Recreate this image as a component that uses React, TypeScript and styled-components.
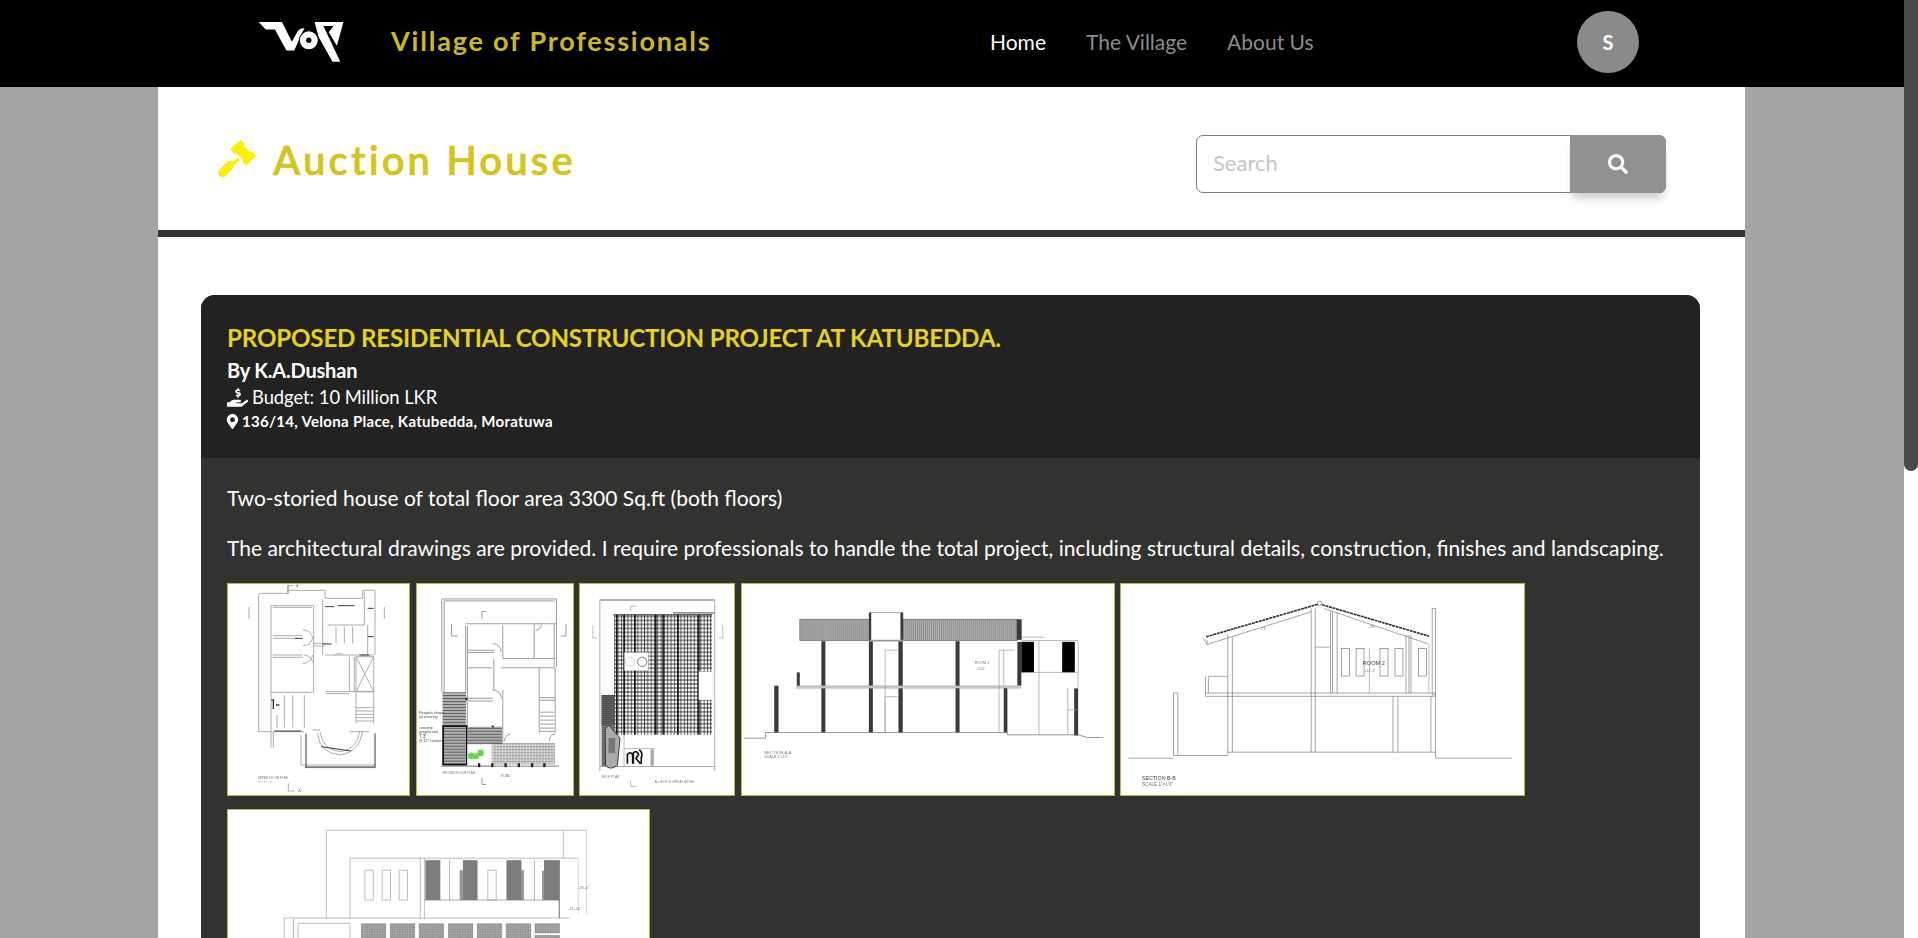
import React from "react";
import styled, { createGlobalStyle } from "styled-components";
import { FaHandHoldingUsd, FaMapMarkerAlt, FaSearch } from "react-icons/fa";

const FONT = `"Lato", "Open Sans", "Liberation Sans", sans-serif`;

const Global = createGlobalStyle`
  html, body { height: 100%; overflow: hidden; }
  body { margin: 0; background: #a4a4a4; font-family: ${FONT}; }
  * { box-sizing: border-box; }
`;

const Shell = styled.div`
  display: flex;
  height: 100vh;
  overflow: hidden;
`;
const Viewport = styled.div`
  flex: 1;
  min-width: 0;
  overflow-y: auto;
  scrollbar-width: none;
`;
const Rail = styled.div`
  width: 14px;
  flex: none;
  background: #fff;
`;
const RailThumb = styled.div`
  height: 471px;
  background: #4a4a4a;
  border-radius: 0 0 7px 7px;
`;

const Header = styled.header`
  height: 87px;
  background: #000;
  padding-left: 258px;
  display: grid;
  grid-template-columns: 732px 587px 62px;
  align-items: center;
`;
const Brand = styled.div`
  display: flex;
  align-items: center;
`;
const LogoSvg = styled.svg`
  width: 86px;
  height: 40px;
  margin: -4px 47px 0 0;
`;
const BrandName = styled.span`
  color: #c9b920;
  font-size: 27px;
  font-weight: 700;
  letter-spacing: 1.8px;
  white-space: nowrap;
  margin-top: -6px;
`;
const Nav = styled.nav`
  display: flex;
  gap: 40px;
  margin-top: -4px;
`;
const NavLink = styled.a<{ $active?: boolean }>`
  color: ${(p) => (p.$active ? "#ffffff" : "#8c8c8c")};
  font-size: 21px;
  white-space: nowrap;
`;
const Avatar = styled.div`
  width: 62px;
  height: 62px;
  margin-top: -3px;
  border-radius: 50%;
  background: #8a8a88;
  color: #fff;
  font-weight: 700;
  font-size: 20px;
  display: flex;
  align-items: center;
  justify-content: center;
`;

const Sheet = styled.main`
  width: 1587px;
  margin-left: 158px;
  min-height: 1781px;
  background: #fff;
`;
const Band = styled.section`
  height: 143px;
  padding: 48px 79px 37px 60px;
  display: flex;
  align-items: flex-start;
  justify-content: space-between;
`;
const PageTitle = styled.h1`
  margin: -4px 0 0;
  display: flex;
  align-items: center;
  gap: 13px;
  color: #d4c41c;
  font-size: 40px;
  line-height: 58px;
  font-weight: 600;
  letter-spacing: 3.1px;
  -webkit-text-stroke: 0.6px #d4c41c;
`;
const GavelSvg = styled.svg`
  width: 42px;
  height: 42px;
  flex: none;
`;
const SearchBox = styled.div`
  width: 470px;
  height: 58px;
  display: flex;
  border: 1px solid #7c7c7c;
  border-radius: 7px;
`;
const SearchInput = styled.input`
  flex: 1;
  min-width: 0;
  border: none;
  outline: none;
  background: transparent;
  padding: 0 16px 3px;
  font-family: ${FONT};
  font-size: 22px;
  &::placeholder { color: #c4c4c8; }
`;
const SearchButton = styled.button`
  width: 96px;
  margin: -1px -1px -1px 0;
  border: none;
  border-radius: 0 7px 7px 0;
  background: #919190;
  color: #fff;
  font-size: 20px;
  display: flex;
  align-items: center;
  justify-content: center;
  box-shadow: 0 8px 10px -3px rgba(0, 0, 0, 0.22);
`;
const Rule = styled.hr`
  margin: 0;
  height: 7px;
  border: none;
  background: #333;
`;
const Card = styled.article`
  margin: 58px 45px 0 43px;
  border-radius: 14px;
  overflow: hidden;
  background: #323230;
`;
const CardHead = styled.div`
  background: #222;
  padding: 28px 26px 27px;
  color: #fff;
`;
const ProjectTitle = styled.h2`
  margin: 0;
  color: #e7d21a;
  font-size: 24.2px;
  line-height: 30px;
  font-weight: 700;
  letter-spacing: -0.2px;
`;
const Owner = styled.div`
  margin-top: 5px;
  font-size: 20px;
  line-height: 24px;
  font-weight: 700;
  letter-spacing: -0.2px;
`;
const Budget = styled.div`
  margin-top: 3px;
  display: flex;
  align-items: center;
  gap: 4px;
  font-size: 18.4px;
  line-height: 24px;
  letter-spacing: -0.05px;
`;
const Place = styled.div`
  margin: 2px 0 0 -2px;
  display: flex;
  align-items: center;
  gap: 2px;
  font-size: 15px;
  line-height: 20px;
  font-weight: 700;
  letter-spacing: 0.3px;
`;
const CardBody = styled.div`
  min-height: 1343px;
  padding: 25px 26px;
  color: #fff;
`;
const Para = styled.p`
  margin: 0 0 20px;
  font-size: 21px;
  line-height: 30px;
  white-space: nowrap;
`;
const Gallery = styled.div`
  display: flex;
  flex-wrap: wrap;
  gap: 13px 5.5px;
`;
const Thumb = styled.svg<{ $w: number }>`
  width: ${(p) => p.$w}px;
  height: 213px;
  background: #fff;
  border: 1px solid #bdb53f;
  display: block;
  flex: none;
`;
const Ink = styled.g`
  filter: blur(0.3px);
`;
const Note = styled.text<{ $dark?: boolean }>`
  font-family: "Liberation Sans", sans-serif;
  fill: ${(p) => (p.$dark ? "#444" : "#777")};
`;

const Drawing = ({ w, box, children }: { w: number; box: string; children: React.ReactNode }) => (
  <Thumb $w={w} viewBox={box}>
    <Ink>{children}</Ink>
  </Thumb>
);

const Logo = () => (
  <LogoSvg viewBox="55 38 250 118">
    <path fill="#fff" d="M55 38H124L153 96L170 66C176 59 184 56 190 56L160 122H137L103 60H76Z" />
    <circle cx="203" cy="92" r="28" fill="#fff" stroke="#000" strokeWidth="3" />
    <circle cx="203" cy="92" r="8" fill="#000" />
    <path fill="#fff" fillRule="evenodd" d="M220 38H305L286 108L262 68L276 50H246L296 155H273L232 82Z" />
  </LogoSvg>
);

const Gavel = () => (
  <GavelSvg viewBox="0 0 42 42">
    <path fill="#ffee00" d="M12 9.5L23 1L26.5 5L26 7L33 13.5L35 13L38 17L28 26.5L24.5 22.5L25 20.5L18 14L16 14.5Z" />
    <path fill="none" stroke="#ffee00" strokeWidth="3.4" d="M21 20L12 27" />
    <path fill="none" stroke="#ffee00" strokeWidth="8.5" strokeLinecap="round" d="M12 26L4.5 34" />
  </GavelSvg>
);

const G = "#9c9c9c";
const D = "#3a3a3a";

const Plan1 = () => (
  <Drawing w={183} box="21 27 543 633">
    <g fill="none" stroke={G} strokeWidth="2.5">
      <path d="M113 472V60Q113 55 120 55H200V32H216M200 46H312V70H425V46H462V240M84 96V132M490 96V132" />
      <path d="M150 92H278V352H150ZM155 97H273M155 182H245M155 190H228M155 240H245M155 247H245" />
      <path d="M278 205H312M278 213H312M305 72V240M430 50V150M385 245V350M400 245V350M312 240H458" />
      <path d="M405 245H458V350H405ZM405 245L458 350M458 245L405 350M315 350H458M315 356H385" />
      <path d="M405 350V445M458 350V445M405 398H458M405 408H458M405 418H458M405 428H458M405 438H458" />
      <path d="M150 350V470H113M155 470H250M150 470V518M157 470V518M385 470H445M275 465H298" />
      <path d="M240 480V570M240 570H465M250 578H465M290 475Q295 535 360 540Q415 530 425 470M298 472Q304 525 360 530Q408 522 416 470" />
      <path d="M245 165A28 28 0 0 1 275 192M245 212A28 28 0 0 0 275 188M245 265A28 28 0 0 0 275 240M250 240A28 28 0 0 1 275 262M168 420V460M190 360V458M215 360V458M250 360V458" />
      <path d="M340 240A24 24 0 0 1 365 238M440 150V240M202 30V55M202 625V648H220M345 155V205M370 155V205M395 155V205M320 150H430" />
    </g>
    <g fill="none" stroke={D} strokeWidth="3">
      <path d="M312 95H340M350 92H400M222 190H245M305 207H332M160 468H240M255 476V578M255 576H460M462 475V578M150 375H158M300 515L390 528M415 240H445M440 100H458M440 185H458" />
      <path d="M157 372V402M165 390H175" strokeWidth="4" />
    </g>
    <Note x="110" y="612" fontSize="9">UPPER FLOOR PLAN</Note>
    <Note x="110" y="620" fontSize="7">SCALE 1"=10'</Note>
    <Note x="225" y="36" fontSize="11">A</Note>
    <Note x="232" y="650" fontSize="11">A</Note>
  </Drawing>
);

const Plan2 = () => (
  <Drawing w={158} box="586 27 471 633">
    <defs>
      <pattern id="p2h" width="8" height="9" patternUnits="userSpaceOnUse">
        <rect width="8" height="9" fill="#bdbdbd" />
        <path d="M0 2H8" stroke="#444" strokeWidth="3" />
      </pattern>
      <pattern id="p2g" width="9" height="9" patternUnits="userSpaceOnUse">
        <path d="M0 3H9" stroke="#333" strokeWidth="2" />
        <path d="M3 0V9" stroke="#666" strokeWidth="1.5" />
      </pattern>
    </defs>
    <g fill="none" stroke={G} strokeWidth="3">
      <path d="M661 352V70H1007V275M668 352V76H1001" />
      <path d="M733 145H940V250M738 152V455M733 150V455M940 145H1007M1000 145V275M845 150V250" />
      <path d="M738 225H820M738 232H820M845 250H1003M840 278H1003M738 278H812M818 250V345M845 345V505M955 278V475M1003 278V475" />
      <path d="M738 370H815M738 378H815M955 368H1003M955 376H1003M955 470H1003" />
      <path d="M958 412H1000M958 424H1000M958 436H1000M958 448H1000M958 460H1000" />
      <path d="M815 205A24 24 0 0 1 840 230M815 345A24 24 0 0 1 840 370M850 500A20 20 0 0 1 868 478M985 500A20 20 0 0 1 1003 478M945 165A20 20 0 0 0 962 145" />
      <path d="M690 146V182H710M1036 146V182H1020M782 108V130M782 108H795M782 610V630H795" />
    </g>
    <rect x="663" y="352" width="70" height="222" fill="url(#p2h)" />
    <rect x="665" y="454" width="71" height="116" fill="none" stroke="#111" strokeWidth="5" />
    <rect x="740" y="456" width="103" height="52" fill="url(#p2h)" />
    <rect x="813" y="505" width="190" height="65" fill="url(#p2g)" />
    <rect x="738" y="510" width="72" height="62" fill="#fff" stroke="#bbb" />
    <g fill="#63d94a">
      <circle cx="750" cy="544" r="10" />
      <circle cx="764" cy="545" r="9" />
      <circle cx="778" cy="535" r="10" />
    </g>
    <path d="M658 575H1015" stroke="#444" strokeWidth="2" />
    <g fill="#222">
      <rect x="770" y="566" width="7" height="12" />
      <rect x="810" y="566" width="7" height="12" />
      <rect x="850" y="566" width="7" height="12" />
      <rect x="890" y="566" width="7" height="12" />
      <rect x="930" y="566" width="7" height="12" />
      <rect x="967" y="566" width="7" height="12" />
      <rect x="732" y="368" width="6" height="8" />
      <rect x="812" y="452" width="6" height="6" />
    </g>
    <Note $dark x="592" y="418" fontSize="12">Pergola shape</Note>
    <Note $dark x="592" y="430" fontSize="11">as covering</Note>
    <Note $dark x="592" y="464" fontSize="11">concrete</Note>
    <Note $dark x="592" y="476" fontSize="11">pergola roof</Note>
    <Note $dark x="592" y="490" fontSize="14">7.3'</Note>
    <Note $dark x="592" y="502" fontSize="11">@ 12" centers</Note>
    <Note x="662" y="600" fontSize="9">GROUND FLOOR PLAN</Note>
    <Note x="840" y="609" fontSize="10">ROAD</Note>
  </Drawing>
);

const Plan3 = () => (
  <Drawing w={156} box="1079 27 465 633">
    <defs>
      <pattern id="p3g" width="10" height="12" patternUnits="userSpaceOnUse">
        <path d="M0 3H10" stroke="#111" strokeWidth="2.4" />
        <path d="M4 0V12" stroke="#111" strokeWidth="2.2" />
      </pattern>
      <pattern id="p3h" width="8" height="6" patternUnits="userSpaceOnUse">
        <rect width="8" height="6" fill="#999" />
        <path d="M0 2H8" stroke="#333" strokeWidth="2.4" />
      </pattern>
    </defs>
    <path d="M1139 590V72H1486V590M1139 576H1486M1142 75H1483" fill="none" stroke={G} strokeWidth="2.5" />
    <rect x="1182" y="118" width="296" height="362" fill="url(#p3g)" />
    <path d="M1190 118V480M1212 118V480M1245 118V480M1308 118V480M1330 118V480M1375 118V480M1438 118V480" stroke="#000" strokeWidth="4" />
    <path d="M1180 118H1478" stroke="#222" strokeWidth="3" />
    <path d="M1360 112H1486" stroke="#999" strokeWidth="5" />
    <rect x="1213" y="232" width="72" height="54" fill="#fff" stroke="#aaa" />
    <circle cx="1230" cy="260" r="14" fill="none" stroke="#ccc" strokeWidth="2" />
    <circle cx="1267" cy="260" r="14" fill="none" stroke="#666" strokeWidth="2.5" />
    <rect x="1438" y="290" width="40" height="85" fill="#fff" stroke="#ddd" />
    <rect x="1144" y="360" width="40" height="215" fill="url(#p3h)" />
    <rect x="1144" y="360" width="40" height="90" fill="#444" opacity="0.55" />
    <rect x="1184" y="482" width="28" height="92" fill="#fff" />
    <path d="M1155 465Q1165 440 1178 465L1200 490L1192 572Q1170 590 1156 572Z" fill="#aaa" stroke="#222" strokeWidth="2.5" />
    <path d="M1165 490H1185V535H1165Z" fill="#777" />
    <path d="M1212 480V575M1212 522H1305M1297 522V575" stroke="#999" strokeWidth="2" fill="none" />
    <path d="M1292 524H1302V574H1292Z" fill="#aaa" />
    <g fill="none" stroke="#111" strokeWidth="5">
      <path d="M1222 568V540Q1230 530 1238 540V568" />
      <path d="M1240 568V535Q1250 525 1256 540L1248 552L1262 568" />
      <path d="M1258 525Q1270 535 1264 550V568" />
    </g>
    <path d="M1232 92V106M1232 92H1250M1118 150V188H1130M1510 150V188H1498M1232 618V636H1250" fill="none" stroke="#777" strokeWidth="1.5" />
    <Note x="1145" y="612" fontSize="9">ROOF PLAN</Note>
    <Note x="1305" y="626" fontSize="8">ALL ROOF SLOPES AS SHOWN</Note>
  </Drawing>
);

const SectionA = () => (
  <Drawing w={374} box="31 27 1120 633">
    <defs>
      <pattern id="sah" width="6" height="10" patternUnits="userSpaceOnUse">
        <rect width="6" height="10" fill="#b4b4b4" />
        <path d="M2 0V10" stroke="#666" strokeWidth="1.5" />
      </pattern>
    </defs>
    <rect x="205" y="132" width="210" height="64" fill="url(#sah)" stroke="#666" strokeWidth="2" />
    <rect x="515" y="132" width="345" height="64" fill="url(#sah)" stroke="#666" strokeWidth="2" />
    <path d="M415 112H515V196" fill="none" stroke="#777" strokeWidth="2" />
    <g fill="#3a3a3a">
      <rect x="413" y="112" width="7" height="84" />
      <rect x="508" y="112" width="8" height="84" />
      <rect x="858" y="132" width="15" height="62" />
      <rect x="270" y="198" width="12" height="275" />
      <rect x="413" y="198" width="12" height="275" />
      <rect x="502" y="198" width="13" height="275" />
      <rect x="674" y="198" width="12" height="275" />
      <rect x="128" y="332" width="13" height="141" />
      <rect x="196" y="292" width="9" height="42" />
      <rect x="819" y="338" width="11" height="135" />
      <rect x="860" y="200" width="12" height="132" />
      <rect x="1031" y="340" width="12" height="142" />
    </g>
    <g fill="#000">
      <rect x="872" y="200" width="38" height="92" />
      <rect x="995" y="200" width="38" height="92" />
    </g>
    <path d="M196 332H870V340H196Z" fill="#c8c8c8" stroke="#888" />
    <path d="M415 194H515V199H415Z" fill="#999" />
    <g fill="none" stroke="#999" strokeWidth="2">
      <path d="M462 472V225H500M462 472V365H500M872 186H940M872 196H1043V340M910 292H1043M925 196V480M1012 340V480M1012 405H1040M805 225H850M805 225V472M819 225V330" />
    </g>
    <path d="M36 490H102V473H830V480H1043L1070 488H1118" fill="none" stroke="#666" strokeWidth="2" />
    <Note x="732" y="266" fontSize="11">ROOM 1</Note>
    <Note x="738" y="284" fontSize="8">+11'-0"</Note>
    <Note x="98" y="539" fontSize="13">SECTION A-A</Note>
    <Note x="98" y="550" fontSize="11">SCALE 1"=1'0"</Note>
  </Drawing>
);

const SectionB = () => (
  <Drawing w={405} box="29 27 1212 633">
    <path d="M285 185L625 86L955 183" fill="none" stroke="#333" strokeWidth="5" strokeDasharray="9 2" />
    <circle cx="626" cy="84" r="6" fill="#fff" stroke="#666" strokeWidth="2" />
    <g fill="none" stroke="#777" strokeWidth="2">
      <path d="M275 188L288 208L600 110M952 206L640 100M288 208V195" />
      <path d="M350 178V532M364 185V532M601 100V532M613 100V532M659 108V355M665 108V355M679 112V355M886 180V355M895 180V355M901 180V355M965 100H975V360H965ZM613 216H660" />
      <path d="M283 354H975V364H283ZM283 304V354M292 304V354M292 304H350M847 364V532M862 364V532M961 364V532M975 364V550" />
      <path d="M187 354H200V542H187ZM200 542H350V532H975M52 550H187M975 550H1205" />
      <rect x="692" y="220" width="24" height="83" />
      <rect x="736" y="220" width="24" height="83" />
      <rect x="808" y="220" width="24" height="83" />
      <rect x="853" y="220" width="24" height="83" />
      <rect x="924" y="220" width="24" height="83" />
      <path d="M776 220V354M955 205V354" strokeWidth="1.5" />
    </g>
    <Note $dark x="756" y="270" fontSize="17">ROOM 2</Note>
    <Note x="762" y="290" fontSize="11">+11'-3"</Note>
    <Note x="450" y="164" fontSize="12">21'</Note>
    <Note x="778" y="160" fontSize="12">28'</Note>
    <Note $dark x="92" y="617" fontSize="16">SECTION B-B</Note>
    <Note x="92" y="634" fontSize="14">SCALE 1"=1'0"</Note>
  </Drawing>
);

const Elevation = () => (
  <Drawing w={423} box="21 28 1267 633">
    <defs>
      <pattern id="elh" width="5" height="5" patternUnits="userSpaceOnUse">
        <rect width="5" height="5" fill="#808080" />
        <circle cx="1.5" cy="1.5" r="1" fill="#5a5a5a" />
      </pattern>
      <pattern id="ell" width="5" height="5" patternUnits="userSpaceOnUse">
        <rect width="5" height="5" fill="#a6a6a6" />
        <circle cx="1.5" cy="1.5" r="1.2" fill="#666" />
      </pattern>
    </defs>
    <g fill="none" stroke="#b0b0b0" strokeWidth="2.5">
      <path d="M317 355V88H1100M1030 88V172M388 355V172H1075M600 172V355M612 172V355" />
      <path d="M1100 88V340M1075 172V340" strokeWidth="1.5" />
      <path d="M190 352H1050M190 352V640M218 352V640M232 368H388V640M232 368V640" />
      <rect x="433" y="208" width="25" height="90" />
      <rect x="485" y="208" width="25" height="90" />
      <rect x="536" y="208" width="25" height="90" />
      <rect x="803" y="208" width="25" height="90" />
    </g>
    <path d="M612 298H1018M688 178V298M943 178V298" fill="none" stroke="#888" strokeWidth="2" />
    <path d="M1018 178V352" stroke="#555" strokeWidth="2.5" />
    <rect x="718" y="208" width="12" height="90" fill="#999" />
    <rect x="900" y="208" width="12" height="90" fill="#999" />
    <rect x="966" y="210" width="8" height="88" fill="#999" />
    <rect x="615" y="178" width="45" height="120" fill="url(#elh)" />
    <rect x="728" y="178" width="44" height="120" fill="url(#elh)" />
    <rect x="859" y="178" width="45" height="120" fill="url(#elh)" />
    <rect x="972" y="178" width="46" height="120" fill="url(#elh)" />
    <rect x="421" y="368" width="76" height="270" fill="url(#ell)" />
    <rect x="508" y="368" width="76" height="270" fill="url(#ell)" />
    <rect x="595" y="368" width="76" height="270" fill="url(#ell)" />
    <rect x="683" y="368" width="76" height="270" fill="url(#ell)" />
    <rect x="770" y="368" width="76" height="270" fill="url(#ell)" />
    <rect x="857" y="368" width="76" height="270" fill="url(#ell)" />
    <rect x="944" y="368" width="76" height="30" fill="url(#ell)" />
    <rect x="944" y="403" width="76" height="235" fill="url(#ell)" />
    <Note x="1078" y="264" fontSize="12">26'-6"</Note>
    <Note x="1048" y="328" fontSize="12">21'-10"</Note>
  </Drawing>
);

export default function App() {
  return (
    <>
      <Global />
      <Shell>
        <Viewport>
          <Header>
            <Brand>
              <Logo />
              <BrandName>Village of Professionals</BrandName>
            </Brand>
            <Nav>
              <NavLink $active>Home</NavLink>
              <NavLink>The Village</NavLink>
              <NavLink>About Us</NavLink>
            </Nav>
            <Avatar>S</Avatar>
          </Header>
          <Sheet>
            <Band>
              <PageTitle>
                <Gavel />
                Auction House
              </PageTitle>
              <SearchBox>
                <SearchInput placeholder="Search" />
                <SearchButton aria-label="Search">
                  <FaSearch />
                </SearchButton>
              </SearchBox>
            </Band>
            <Rule />
            <Card>
              <CardHead>
                <ProjectTitle>PROPOSED RESIDENTIAL CONSTRUCTION PROJECT AT KATUBEDDA.</ProjectTitle>
                <Owner>By K.A.Dushan</Owner>
                <Budget>
                  <FaHandHoldingUsd size={21} />
                  Budget: 10 Million LKR
                </Budget>
                <Place>
                  <FaMapMarkerAlt size={15} />
                  136/14, Velona Place, Katubedda, Moratuwa
                </Place>
              </CardHead>
              <CardBody>
                <Para>Two-storied house of total floor area 3300 Sq.ft (both floors)</Para>
                <Para>
                  The architectural drawings are provided. I require professionals to handle the total project, including
                  structural details, construction, finishes and landscaping.
                </Para>
                <Gallery>
                  <Plan1 />
                  <Plan2 />
                  <Plan3 />
                  <SectionA />
                  <SectionB />
                  <Elevation />
                </Gallery>
              </CardBody>
            </Card>
          </Sheet>
        </Viewport>
        <Rail>
          <RailThumb />
        </Rail>
      </Shell>
    </>
  );
}
